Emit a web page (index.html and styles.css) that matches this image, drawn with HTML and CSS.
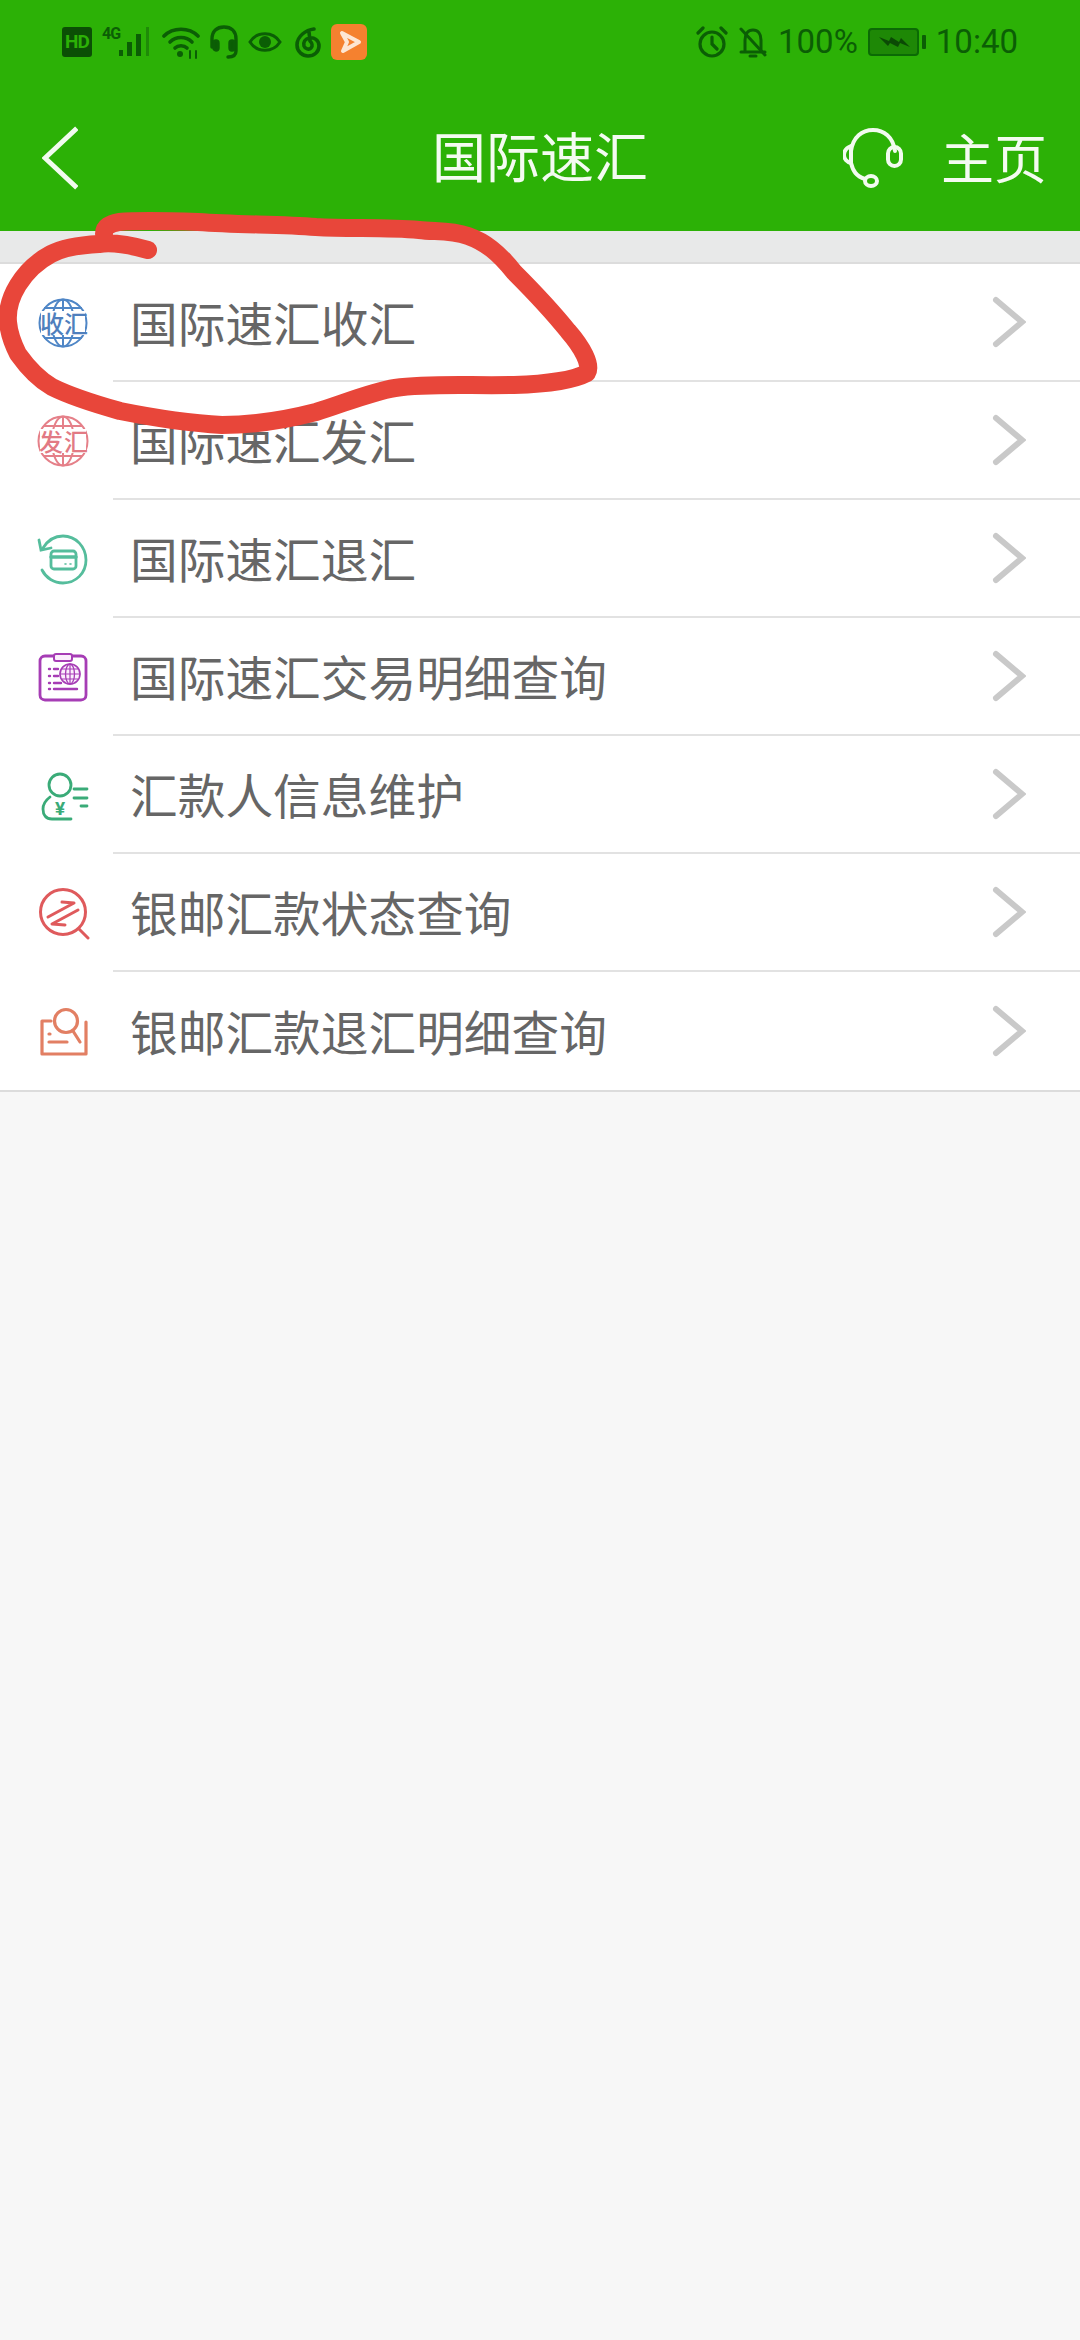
FILE: index.html
```html
<!DOCTYPE html>
<html lang="zh-CN">
<head>
<meta charset="utf-8">
<title>国际速汇</title>
<link rel="stylesheet" href="styles.css">
</head>
<body>
<div class="page">
  <header class="header">
    <div class="status">
      <div class="status-left">
        <span class="hd">HD</span>
        <span class="net"><span class="four-g">4G</span>
          <svg class="sig" viewBox="0 0 32 30" width="32" height="30"><rect x="0" y="23" width="4" height="6" fill="#0b5e05"/><rect x="8" y="15" width="5" height="14" fill="#0b5e05"/><rect x="17" y="7" width="5" height="22" fill="#0b5e05"/><rect x="27" y="0" width="3" height="29" fill="#1f8a08"/></svg>
        </span>
        <svg class="wifi" viewBox="0 0 38 34" width="38" height="34" fill="none" stroke="#0b5e05" stroke-width="3.6" stroke-linecap="round"><path d="M2 11C11 2 27 2 36 11"/><path d="M8 17C14 11 24 11 30 17"/><path d="M13 23C16 20 22 20 25 23"/><circle cx="18" cy="29" r="3" fill="#0b5e05" stroke="none"/><path d="M28 26v7M34 26v7" stroke-width="2"/></svg>
        <svg class="hs" viewBox="0 0 30 34" width="30" height="34" fill="none" stroke="#0b5e05" stroke-width="3.4" stroke-linecap="round"><path d="M3 22V14C3 6 8 2 15 2S27 6 27 14V26C27 30 24 32 19 32"/><rect x="5" y="16" width="4" height="9" rx="2" fill="#0b5e05"/><rect x="21" y="16" width="4" height="9" rx="2" fill="#0b5e05"/></svg>
        <svg class="eye" viewBox="0 0 34 26" width="34" height="26" fill="none" stroke="#0b5e05" stroke-width="3"><path d="M2 13C9 2 25 2 32 13C25 24 9 24 2 13Z"/><circle cx="17" cy="13" r="6" fill="#0b5e05" stroke="none"/></svg>
        <svg class="ne" viewBox="0 0 28 32" width="28" height="32" fill="none" stroke="#0b5e05" stroke-width="3.6" stroke-linecap="round"><path d="M20 3C12 4 3 10 3 19C3 26 9 30 14 30C20 30 25 26 25 20C25 14 20 11 15 12C11 13 9 16 10 20C11 23 15 24 17 22C19 20 18 17 16 15L15 6"/></svg>
        <span class="app"><svg viewBox="0 0 34 34" width="34" height="34" fill="none" stroke="#fde6d3" stroke-width="4" stroke-linejoin="round"><path d="M10 8L27 17L11 26L15 17Z"/></svg></span>
      </div>
      <div class="status-right">
        <svg class="alarm" viewBox="0 0 32 32" width="32" height="32" fill="none" stroke="#0b5e05" stroke-width="3.2" stroke-linecap="round"><circle cx="16" cy="18" r="12"/><path d="M16 11V18L21 23M2 7L7 2M30 7L25 2"/></svg>
        <svg class="bell" viewBox="0 0 30 32" width="30" height="32" fill="none" stroke="#0b5e05" stroke-width="3" stroke-linecap="round"><path d="M3 26H27M7 25V14C7 8 10 4 15 4S23 8 23 14V25"/><path d="M3 3L27 29"/><path d="M12 30H18"/></svg>
        <span class="pct">100%</span>
        <svg class="bat" viewBox="0 0 58 28" width="58" height="28"><rect x="1" y="1" width="49" height="26" rx="3" fill="#1e8806" stroke="#0b6a05" stroke-width="2"/><rect x="54" y="7" width="4" height="14" rx="1" fill="#0b5e05"/><path d="M11 9L21 13L23 9L31 14L33 10L42 19L32 15L30 19L22 15L20 18Z" fill="#0b4a05"/></svg>
        <span class="time">10:40</span>
      </div>
    </div>
    <div class="toolbar">
      <svg class="back" viewBox="0 0 36 64" width="36" height="64" fill="none" stroke="#f2fbef" stroke-width="5" stroke-linecap="square"><path d="M33 4L3 32L33 60"/></svg>
      <h1 class="title">国际速汇</h1>
      <div class="tools">
        <svg viewBox="0 0 60 60" width="60" height="60" fill="none" stroke="#f2fbef" stroke-width="4" stroke-linecap="round"><path d="M8 23C10 9 19 2 30 2S50 9 52 23"/><path d="M8 18C3 20 1 24 1 27C1 31 4 34 8 35Z"/><rect x="45" y="19" width="13" height="19" rx="6.5"/><path d="M8 35C10 43 13 48 22 51"/><ellipse cx="28" cy="53" rx="6" ry="5"/></svg>
        <span class="home">主页</span>
      </div>
    </div>
  </header>

  <div class="band"></div>

  <ul class="list">
    <li class="row">
      <span class="cell"><svg viewBox="0 0 56 54" width="56" height="54" fill="none" stroke="#4f86c6" stroke-width="2"><circle cx="28" cy="27" r="23.5"/><ellipse cx="28" cy="27" rx="11" ry="23.5"/><path d="M28 3V51M9 12H47M9 42H47"/><rect x="6" y="15" width="44" height="24" fill="#fff" stroke="none"/><text x="5" y="37" class="seal" fill="#4f7fbd" stroke="none">收</text><text x="29" y="37" class="seal" fill="#4f7fbd" stroke="none">汇</text></svg></span>
      <span class="body"><span class="label">国际速汇收汇</span><svg class="chev" viewBox="0 0 34 52" width="34" height="52" fill="none" stroke="#c9c9c9" stroke-width="6" stroke-linecap="round"><path d="M4 4L30 26L4 48"/></svg></span>
    </li>
    <li class="row">
      <span class="cell"><svg viewBox="0 0 56 54" width="56" height="54" fill="none" stroke="#e58089" stroke-width="2"><circle cx="28" cy="27" r="24.5"/><ellipse cx="28" cy="27" rx="11" ry="24.5"/><path d="M28 3V51M9 12H47M9 42H47"/><rect x="5" y="15" width="46" height="24" fill="#fff" stroke="none"/><text x="4" y="37" class="seal" fill="#e27a84" stroke="none">发</text><text x="29" y="37" class="seal" fill="#e27a84" stroke="none">汇</text></svg></span>
      <span class="body"><span class="label">国际速汇发汇</span><svg class="chev" viewBox="0 0 34 52" width="34" height="52" fill="none" stroke="#c9c9c9" stroke-width="6" stroke-linecap="round"><path d="M4 4L30 26L4 48"/></svg></span>
    </li>
    <li class="row">
      <span class="cell"><svg viewBox="0 0 56 54" width="56" height="54" fill="none" stroke="#55bd9c" stroke-width="2.8" stroke-linecap="round"><path d="M8 16C13 8 20 4 28 4C41 4 51 15 51 28S41 51 28 51C19 51 11 46 7 38"/><path d="M4 8L6 18L16 16"/><rect x="16" y="19" width="25" height="18" rx="3"/><path d="M16 25H41" stroke-width="3.5"/><path d="M30 32H31M35 32H36" stroke-width="1.6"/></svg></span>
      <span class="body"><span class="label">国际速汇退汇</span><svg class="chev" viewBox="0 0 34 52" width="34" height="52" fill="none" stroke="#c9c9c9" stroke-width="6" stroke-linecap="round"><path d="M4 4L30 26L4 48"/></svg></span>
    </li>
    <li class="row">
      <span class="cell"><svg viewBox="0 0 56 54" width="56" height="54" fill="none" stroke="#a63db5" stroke-width="2.8" stroke-linecap="round"><path d="M19 6H10C7 6 5 8 5 11V45C5 48 7 50 10 50H46C49 50 51 48 51 45V11C51 8 49 6 46 6H37"/><rect x="19" y="4" width="18" height="7" rx="2" stroke-width="2" fill="#fbeefc"/><circle cx="35" cy="24" r="10" stroke-width="1.6" fill="#fbeefc"/><ellipse cx="35" cy="24" rx="4.5" ry="10" stroke-width="1.3"/><path d="M25 24H45M27 19H43M27 29H43M35 14V34" stroke-width="1.2"/><path d="M14 19H15M14 26H15M14 33H15M14 39H15M19 19H23M19 26H23M19 33H26M19 39H42" stroke-width="2.4"/></svg></span>
      <span class="body"><span class="label">国际速汇交易明细查询</span><svg class="chev" viewBox="0 0 34 52" width="34" height="52" fill="none" stroke="#c9c9c9" stroke-width="6" stroke-linecap="round"><path d="M4 4L30 26L4 48"/></svg></span>
    </li>
    <li class="row">
      <span class="cell"><svg viewBox="0 0 56 54" width="56" height="54" fill="none" stroke="#3aab78" stroke-width="2.8" stroke-linecap="round"><circle cx="25" cy="17" r="11"/><path d="M15 29C11 32 8 37 8 41C8 47 11 51 17 51H36"/><path d="M39 21H52M39 30H52M46 38H52"/><text x="20" y="47" class="yen" fill="#3aab78" stroke="none">¥</text></svg></span>
      <span class="body"><span class="label">汇款人信息维护</span><svg class="chev" viewBox="0 0 34 52" width="34" height="52" fill="none" stroke="#c9c9c9" stroke-width="6" stroke-linecap="round"><path d="M4 4L30 26L4 48"/></svg></span>
    </li>
    <li class="row">
      <span class="cell"><svg viewBox="0 0 56 54" width="56" height="54" fill="none" stroke="#df5a5c" stroke-width="3" stroke-linecap="round" stroke-linejoin="round"><circle cx="28" cy="26" r="22.5"/><path d="M44 43L53 52"/><path d="M13 31L39 17L27 16M43 24L17 38L30 39"/></svg></span>
      <span class="body"><span class="label">银邮汇款状态查询</span><svg class="chev" viewBox="0 0 34 52" width="34" height="52" fill="none" stroke="#c9c9c9" stroke-width="6" stroke-linecap="round"><path d="M4 4L30 26L4 48"/></svg></span>
    </li>
    <li class="row">
      <span class="cell"><svg viewBox="0 0 56 54" width="56" height="54" fill="none" stroke="#e27f63" stroke-width="3.2" stroke-linecap="round" stroke-linejoin="round"><path d="M16 17H7V50H51V18"/><circle cx="31" cy="17" r="11.5"/><path d="M38 27L45 38M14 30H15M14 38H32"/></svg></span>
      <span class="body body-last"><span class="label">银邮汇款退汇明细查询</span><svg class="chev" viewBox="0 0 34 52" width="34" height="52" fill="none" stroke="#c9c9c9" stroke-width="6" stroke-linecap="round"><path d="M4 4L30 26L4 48"/></svg></span>
    </li>
  </ul>

  <svg class="ring" viewBox="0 0 1080 2340" width="1080" height="2340" fill="none" stroke="#e8463a" stroke-width="18" stroke-linecap="round" stroke-linejoin="round"><path d="M148 250C130 245 112 242 99 244C80 245 62 248 51 254C36 262 26 272 18 285C10 298 7 310 8 322C9 334 13 344 18 354C28 368 38 379 52 387C72 397 95 404 120 411C150 417 185 423 222 425C255 425 285 420 316 412C340 405 370 392 395 388C430 383 470 386 514 385C545 384 572 381 587 373C592 365 582 347 568 331C548 306 532 290 514 272C498 252 485 242 468 236C450 230 435 232 419 230C385 227 350 229 316 227C280 224 240 225 198 222C170 221 140 220 119 222C110 224 104 226 104 234"/></svg>
</div>
</body>
</html>
```
FILE: styles.css
```css
* { box-sizing: border-box; }
html, body { margin: 0; padding: 0; }
body { font-family: "Noto Sans CJK SC", "Noto Sans", sans-serif; background: #f7f7f7; }
.page { position: relative; width: 1080px; height: 2340px; background: #f7f7f7; overflow: hidden; }

.header { height: 231px; background: #2cb106; display: flex; flex-direction: column; }
.status { height: 84px; padding: 0 62px; display: flex; justify-content: space-between; align-items: center; color: #0b5e05; }
.status-left { display: flex; align-items: center; gap: 9px; }
.status-right { display: flex; align-items: center; gap: 10px; }
.hd { width: 30px; height: 30px; background: #0b4f05; color: #2cb106; border-radius: 3px; font: 700 19px/30px "Roboto", sans-serif; text-align: center; letter-spacing: -1px; }
.net { display: flex; align-items: flex-end; position: relative; height: 30px; width: 50px; padding-left: 18px; }
.four-g { position: absolute; left: 1px; top: -2px; font: 700 16px/18px "Roboto", sans-serif; color: #0b5e05; letter-spacing: -1px; }
.wifi { margin-left: 2px; }
.ne { margin-left: 3px; }
.app { width: 36px; height: 36px; background: #f5812f; border-radius: 6px; display: flex; align-items: center; justify-content: center; }
.app svg { display: block; }
.alarm { margin-right: 1px; }
.bell { margin-left: -1px; }
.pct, .time { font: 400 33px/40px "Roboto", sans-serif; color: #0b5e05; }

.toolbar { flex: 1; display: grid; grid-template-columns: 1fr auto 1fr; align-items: center; padding: 0 33px; }
.back { display: block; margin-left: 9px; }
.title { margin: 0; padding-bottom: 5px; font-weight: 400; font-size: 54px; line-height: 70px; color: #f4fbf1; }
.tools { display: flex; justify-content: flex-end; align-items: center; gap: 38px; }
.home { padding-bottom: 3px; font-size: 53px; line-height: 70px; color: #f4fbf1; }

.band { height: 33px; background: #e8e9e9; border-bottom: 2px solid #dcdcdc; }

.list { list-style: none; margin: 0; padding: 0; background: #fff; border-bottom: 2px solid #dcdcdc; }
.row { display: flex; height: 118px; }
.cell { width: 113px; display: flex; align-items: center; justify-content: center; padding-left: 13px; }
.cell svg { display: block; }
.body { flex: 1; display: flex; align-items: center; justify-content: space-between; padding: 0 54px 0 17px; border-bottom: 2px solid #e2e2e2; }
.body-last { border-bottom: 0; }
.label { font-size: 47.7px; line-height: 64px; color: #666; }
.chev { display: block; }
.seal { font-family: "Noto Sans CJK SC", sans-serif; font-size: 24px; font-weight: 500; }
.yen { font-family: "Roboto", sans-serif; font-size: 19px; font-weight: 700; }

.ring { position: absolute; left: 0; top: 0; pointer-events: none; }
```
